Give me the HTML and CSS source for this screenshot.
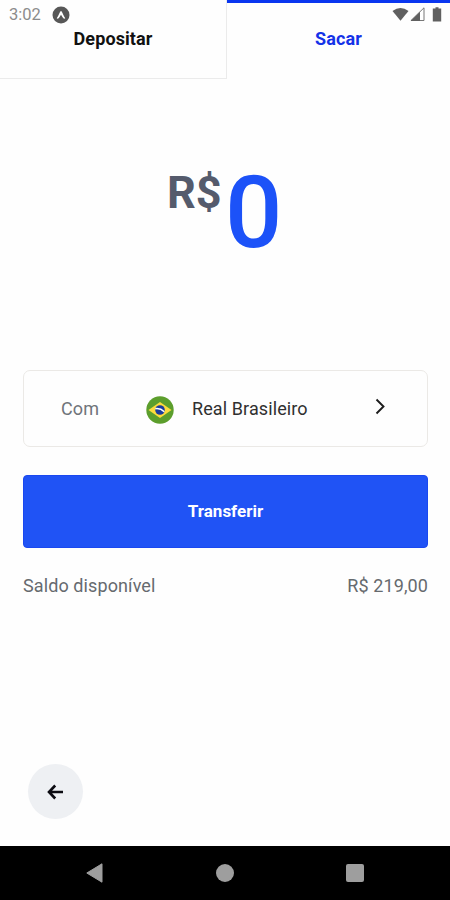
FILE: index.html
```html
<!DOCTYPE html>
<html lang="pt-BR">
<head>
	<meta charset="utf-8">
	<meta name="viewport" content="width=device-width, initial-scale=1">
	<title>Sacar</title>
	<link rel="stylesheet" href="styles.css">
</head>
<body>
	<div class="screen">
		<!-- android status bar, floats over the tabs -->
		<div class="status">
			<span class="clock">3:02</span>
			<svg class="expo" width="18" height="18" viewBox="0 0 18 18">
				<circle cx="9" cy="9" r="8.5" fill="#575757"/>
				<path d="M4.700 12.300C6.400 10 7.200 7.600 8.300 5.600q.7-1.100 1.400 0c1.100 2 1.900 4.400 3.600 6.700-1.300 1.400-2.200-.4-4.300-3.600-2.100 3.200-3 5-4.300 3.600z" fill="#fff"/>
			</svg>
			<svg class="signals" width="52" height="16" viewBox="0 0 52 16">
				<path d="M0.500 4Q8.500-2 16.500 4L8.500 13.800z" fill="#606060"/>
				<path d="M32 .8V13.500H19z" fill="#fff" stroke="#777" stroke-width="1"/>
				<path d="M28 4.700V14H18.500z" fill="#606060"/>
				<path d="M43.500 1.500V.3h3v1.200h2.700V14.500h-8.400V1.500z" fill="#606060"/>
			</svg>
		</div>
		<div class="tabs">
			<div class="tab tab-off">Depositar</div>
			<div class="tab tab-on">Sacar</div>
		</div>
		<!-- amount typed by the user -->
		<div class="amount">
			<span class="currency">R$</span>
			<span class="value">0</span>
		</div>
		<div class="content">
			<div class="account">
				<span class="with">Com</span>
				<svg class="flag" width="28" height="28" viewBox="0 0 28 28">
					<circle cx="14" cy="14" r="13.700" fill="#5c9e2c"/>
					<path d="M2.500 14L14 6l11.500 8L14 22z" fill="#fddb3c"/>
					<circle cx="14" cy="14" r="4.800" fill="#1c3b9c"/>
					<path d="M9.300 12.700q5-.8 9 3" fill="none" stroke="#fff" stroke-width="1.500"/>
				</svg>
				<span class="name">Real Brasileiro</span>
				<svg class="chevron" width="11" height="17" viewBox="0 0 11 17">
					<path d="M1.500 1.500L8.500 8.500L1.500 15.500" fill="none" stroke="#1c1c1c" stroke-width="1.900"/>
				</svg>
			</div>
			<div class="transfer">Transferir</div>
			<div class="balance">
				<span>Saldo disponível</span>
				<span class="total">R$ 219,00</span>
			</div>
		</div>
		<div class="back">
			<svg width="17" height="16" viewBox="0 0 17 16">
				<path d="M8.200 1.500L2 8l6.200 6.500M2.500 8H16" fill="none" stroke="#0c0c12" stroke-width="2.600"/>
			</svg>
		</div>
		<!-- android navigation -->
		<div class="nav">
			<svg width="17" height="20" viewBox="0 0 17 20"><path d="M16 .8V19.200L.8 10z" fill="#9e9e9e" stroke="#9e9e9e" stroke-linejoin="round"/></svg>
			<div class="home"></div>
			<div class="recent"></div>
		</div>
	</div>
</body>
</html>
```
FILE: styles.css
```css
body {
	margin: 0;
	font-family: Roboto, sans-serif;
	background-color: #fefefe;
}
.screen {
	position: relative;
	display: flex;
	flex-direction: column;
	width: 450px;
	height: 900px;
	overflow: hidden;
}
/* status bar over the tabs */
.status {
	position: absolute;
	left: 0;
	top: 5px;
	width: 100%;
	height: 19px;
	display: flex;
	align-items: center;
	box-sizing: border-box;
	padding: 0 6px 0 9px;
}
.clock {
	width: 43px;
	font-size: 16.5px;
	color: #8c8c8c;
}
.signals {
	margin-left: auto;
}
/* top tabs */
.tabs {
	display: flex;
	height: 79px;
}
.tab {
	box-sizing: border-box;
	text-align: center;
	font-size: 18px;
	font-weight: 700;
	letter-spacing: 0.1px;
	line-height: 22px;
}
.tab-off {
	width: 227px;
	padding-top: 28px;
	border-right: 1px solid #ebebeb;
	border-bottom: 1px solid #ebebeb;
	color: #111;
}
.tab-on {
	width: 223px;
	padding-top: 25px;
	border-top: 3px solid #0a36f0;
	color: #1432e8;
}
/* amount */
.amount {
	display: flex;
	height: 291px;
	box-sizing: border-box;
	padding: 84px 0 0 167px;
}
.currency {
	width: 58px;
	margin-top: 3px;
	font-size: 45px;
	font-weight: 700;
	line-height: 53px;
	color: #555b6c;
}
.value {
	font-size: 101px;
	font-weight: 500;
	line-height: 100px;
	color: #1c52f8;
}
.content {
	padding: 0 22px 0 23px;
}
/* account selector */
.account {
	display: flex;
	align-items: center;
	box-sizing: border-box;
	height: 77px;
	padding: 0 41px 0 37px;
	border: 1px solid #ebe9e6;
	border-radius: 7px;
	font-size: 18px;
	letter-spacing: 0.1px;
}
.with {
	width: 85px;
	color: #70747a;
}
.flag {
	margin: 3px 18px 0 0;
}
.name {
	color: #303030;
}
.chevron {
	margin: -4px 0 0 auto;
}
/* main button */
.transfer {
	height: 73px;
	margin-top: 28px;
	border-radius: 4px;
	box-sizing: border-box;
	border: 1px solid #1a48f0;
	background-color: #2053f5;
	color: #fff;
	font-size: 17px;
	font-weight: 700;
	line-height: 70px;
	text-align: center;
}
.balance {
	display: flex;
	justify-content: space-between;
	margin-top: 27px;
	font-size: 18px;
	letter-spacing: 0.1px;
	line-height: 22px;
	color: #666a6e;
}
/* round back button */
.back {
	display: flex;
	align-items: center;
	justify-content: center;
	width: 55px;
	height: 55px;
	margin: auto 0 27px 28px;
	border-radius: 50%;
	background-color: #eef0f3;
}
.nav {
	display: flex;
	align-items: center;
	justify-content: space-between;
	box-sizing: border-box;
	height: 54px;
	padding: 0 86px;
	background-color: #000;
}
.home {
	width: 18px;
	height: 18px;
	border-radius: 50%;
	background-color: #9e9e9e;
}
.recent {
	width: 18px;
	height: 18px;
	border-radius: 2px;
	background-color: #9e9e9e;
}
```
